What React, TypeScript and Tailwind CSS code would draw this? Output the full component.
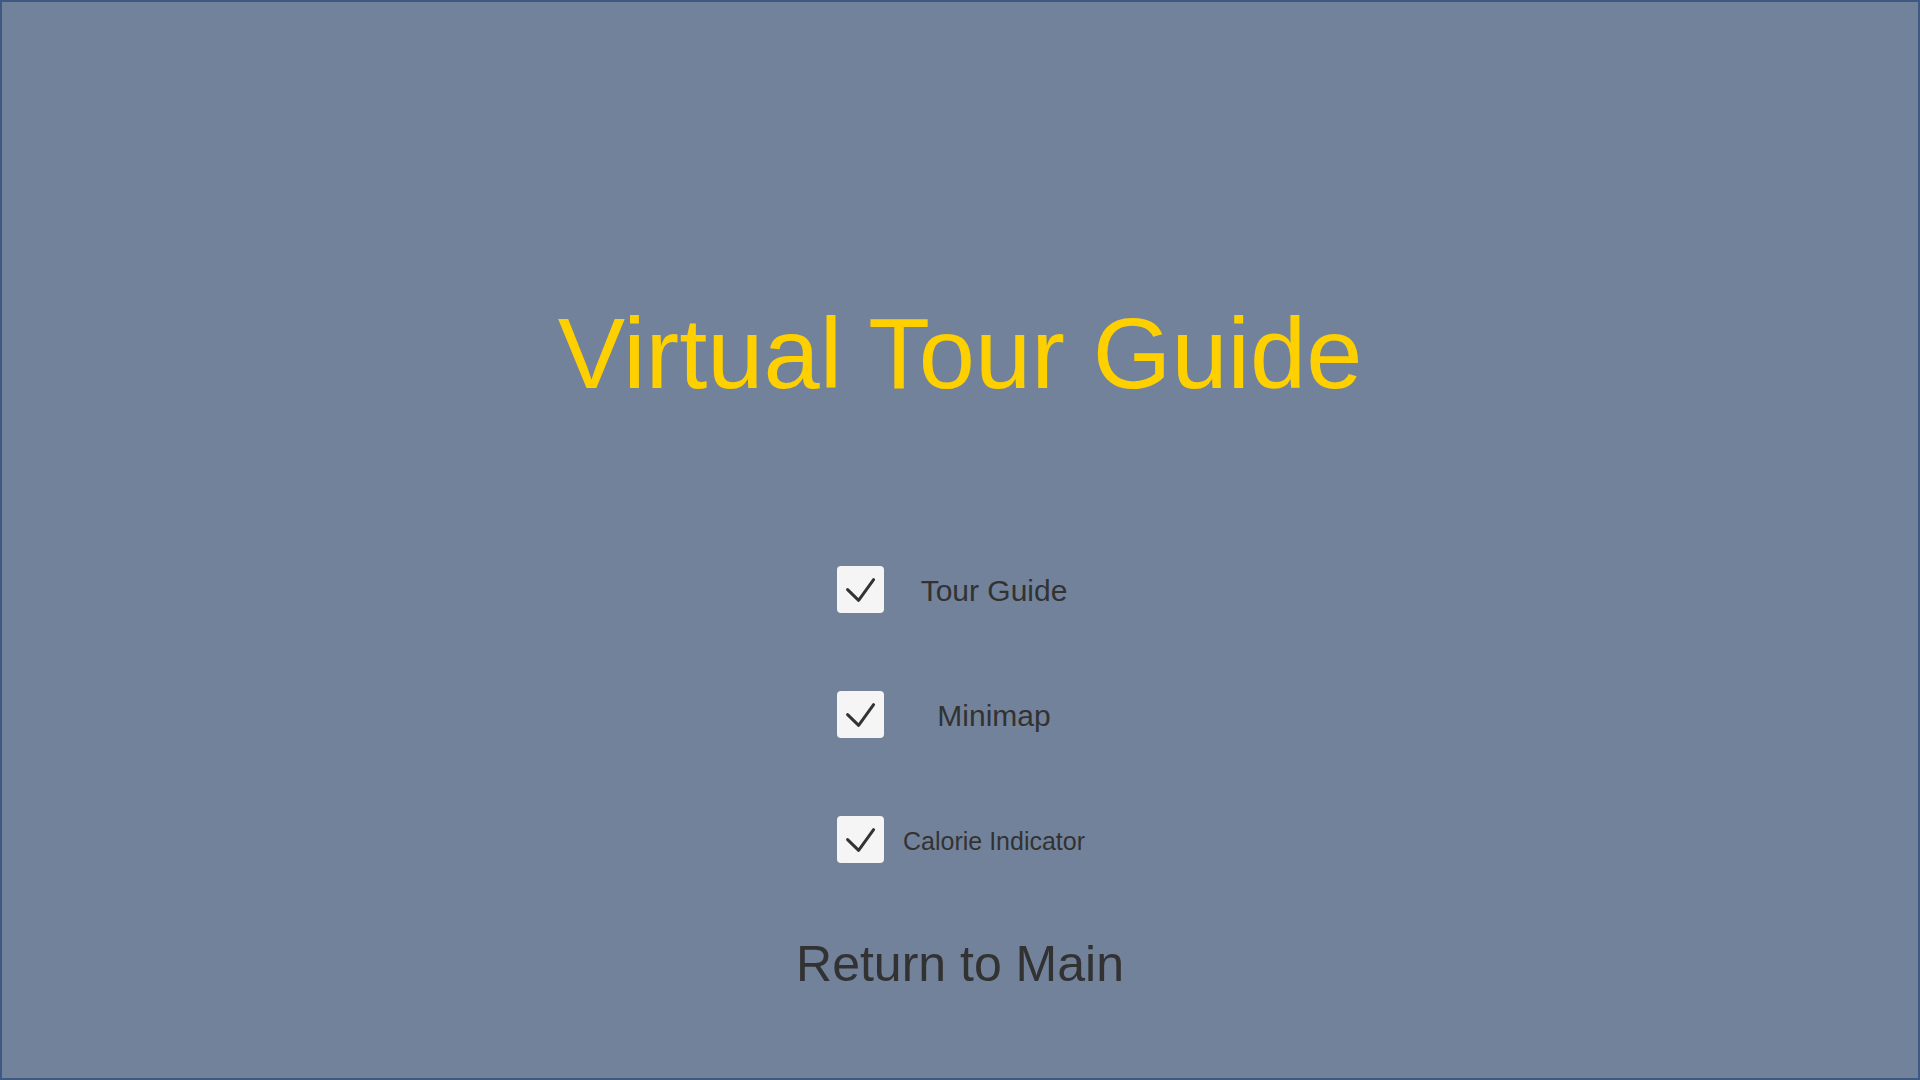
const options = [
  { label: "Tour Guide", size: "text-[30px]" },
  { label: "Minimap", size: "text-[30px]" },
  { label: "Calorie Indicator", size: "text-[25px]" },
];

function CheckBox() {
  return (
    <div className="flex h-[47px] w-[47px] shrink-0 items-center justify-center rounded-[4px] bg-[#f5f5f5]">
      <svg width="47" height="47" viewBox="0 0 47 47" fill="none">
        <path
          d="M10.6 23.6 L21.6 34.3 L36.6 13.6"
          stroke="#333333"
          strokeWidth="3"
          strokeLinecap="round"
          strokeLinejoin="round"
        />
      </svg>
    </div>
  );
}

export default function App() {
  return (
    <div
      className="flex h-[1080px] w-[1920px] flex-col items-center border-2 border-[#3e5a83] bg-[#72829b] pt-[301px]"
      style={{ fontFamily: '"Liberation Sans", Arial, sans-serif' }}
    >
      <h1 className="text-[101px] leading-none text-[#ffd000]">
        Virtual Tour Guide
      </h1>

      <div className="mt-[162px] ml-[21px] flex flex-col gap-[78px]">
        {options.map((option) => (
          <div key={option.label} className="flex h-[47px] w-[267px] items-center">
            <CheckBox />
            <span
              className={`mt-[3px] flex-1 text-center leading-none text-[#323232] ${option.size}`}
            >
              {option.label}
            </span>
          </div>
        ))}
      </div>

      <button className="mt-[76px] text-[50px] leading-none text-[#323232]">
        Return to Main
      </button>
    </div>
  );
}
